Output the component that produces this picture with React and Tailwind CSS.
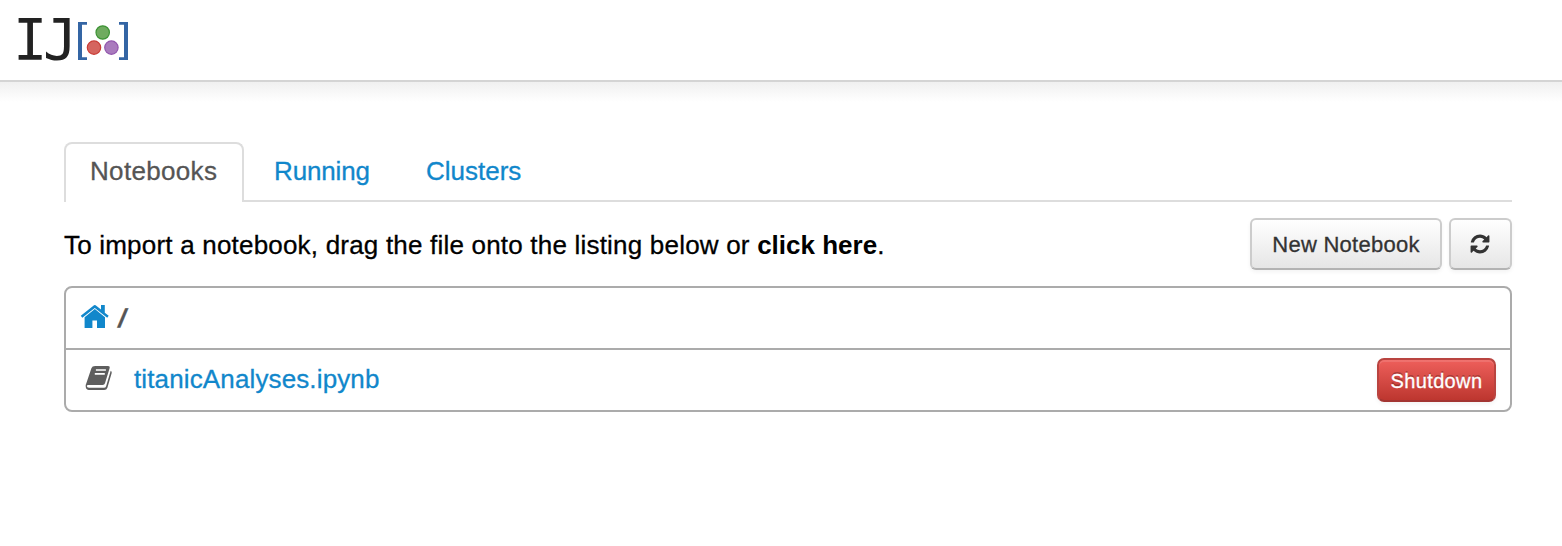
import React from "react";

function RefreshIcon() {
  return (
    <svg viewBox="0 0 1792 1792" fill="currentColor" className="size-[22px]" aria-hidden="true">
      <path d="M1639 1056q0 5-1 7-64 268-268 434.5t-478 166.5q-146 0-282.5-55t-243.5-157l-129 129q-19 19-45 19t-45-19-19-45v-448q0-26 19-45t45-19h448q26 0 45 19t19 45-19 45l-137 137q71 66 161 102t187 36q134 0 250-65t186-179q11-17 53-117 8-23 30-23h192q13 0 22.5 9.5t9.5 22.5zm25-800v448q0 26-19 45t-45 19h-448q-26 0-45-19t-19-45 19-45l138-138q-148-137-349-137-134 0-250 65t-186 179q-11 17-53 117-8 23-30 23h-199q-13 0-22.5-9.5t-9.5-22.5v-7q65-268 270-434.5t480-166.5q146 0 284 55.5t245 156.5l130-129q19-19 45-19t45 19 19 45z" />
    </svg>
  );
}

function HomeIcon() {
  return (
    <svg width="30" height="24" viewBox="0 0 30 24" fill="currentColor" className="mb-1 text-[#1187cb]" aria-hidden="true">
      <path d="M14 1.2q.8-.6 1.6 0L21 5.6V1h3.8v7.7l3.9 3.1-1.5 2L14.8 3.9 2.3 13.8.8 11.8z" />
      <path d="M14.8 5.1 25 13.2V23.9h-8V16.5h-4.6v7.4H4.6V13.2z" />
    </svg>
  );
}

function BookIcon() {
  return (
    <svg width="28" height="26" viewBox="0 0 28 26" className="mb-1 text-[#5e5e5e]" aria-hidden="true">
      <path
        d="M10.2 1H23q2.2 0 1.6 2.2L20 18.2q-.5 1.7-2.4 1.7H3.2q-1.4 0-1.4 1.2 0 1.6 2.2 1.6h15q1.6 0 2.1-1.5L25.7 5.7q1.4.7 1 2.2L22.4 22.7Q21.6 25 19.2 25H4Q.9 25 .7 21.6q-.1-2.1.9-4.1L6.4 3.2Q7.1 1 10.2 1z"
        fill="currentColor"
      />
      <path d="M10.9 5h10M9.8 8.9h10" fill="none" stroke="white" strokeWidth="1.6" />
    </svg>
  );
}

function Logo() {
  return (
    <a className="flex h-20 items-start pl-[13px]">
      <span className="mt-[7px] w-[65px] whitespace-nowrap font-['DejaVu_Sans_Mono',monospace] text-[57px] leading-[66px] tracking-[-4.4px] text-[#222]">
        IJ
      </span>
      <svg width="50" height="38" viewBox="0 0 50 38" className="mt-[22px]" aria-hidden="true">
        <path d="M9 0H0v38h9v-2.8H4V2.8h5zM41 0h9v38h-9v-2.8h5V2.8h-5z" fill="#3465a4" />
        <circle cx="24.7" cy="10.5" r="6.7" fill="#6fab5f" stroke="#3c9334" strokeWidth="1.2" />
        <circle cx="16" cy="25.6" r="6.7" fill="#d5655f" stroke="#c93b35" strokeWidth="1.2" />
        <circle cx="33.4" cy="25.6" r="6.7" fill="#a97bbd" stroke="#9155ad" strokeWidth="1.2" />
      </svg>
    </a>
  );
}

const buttonClass =
  "flex h-[52px] items-center justify-center rounded-[6px] border-2 border-[#ccc] border-b-[#b3b3b3] bg-linear-to-b from-white to-[#e6e6e6] text-[#333] shadow-[0_2px_4px_rgba(0,0,0,0.05)]";

export default function App() {
  return (
    <div className="min-h-[546px] bg-white font-['Liberation_Sans',Arial,sans-serif] text-[26px] leading-10 text-black [-webkit-text-stroke:0.3px_currentColor]">
      <header className="h-[82px] border-b-2 border-[#d4d4d4] [-webkit-text-stroke:0]">
        <Logo />
      </header>
      <div className="h-5 bg-linear-to-b from-[#f0f0f0] to-white" />
      <main className="ml-16 mr-[50px] pt-10">
        <nav className="flex h-[60px] gap-1 border-b-2 border-[#ddd]">
          <a className="h-[60px] w-[180px] rounded-t-[8px] border-2 border-b-0 border-[#ddd] bg-white pl-6 pt-[7px] tracking-[0.33px] text-[#555]">
            Notebooks
          </a>
          <a className="w-[148px] pl-[26px] pt-[9px] tracking-[-0.15px] text-[#1187cb]">Running</a>
          <a className="w-[148px] pl-[26px] pt-[9px] text-[#1187cb]">Clusters</a>
        </nav>
        <div className="flex items-start justify-between pt-4">
          <p className="pt-[7px] whitespace-nowrap tracking-[0.2px]">
            To import a notebook, drag the file onto the listing below or{" "}
            <strong className="tracking-normal [-webkit-text-stroke:0]">click here</strong>.
          </p>
          <div className="flex gap-[7px]">
            <button className={buttonClass + " w-[192px] pt-px text-[22px] tracking-[0.27px]"}>New Notebook</button>
            <button className={buttonClass + " w-[63px] pr-px"}>
              <RefreshIcon />
            </button>
          </div>
        </div>
        <section className="mt-4 h-[126px] rounded-[8px] border-2 border-[#ababab]">
          <div className="flex h-[62px] items-center border-b-2 border-[#ababab] pl-[14px]">
            <HomeIcon />
            <span className="ml-[9px] inline-block -skew-x-[13deg] text-[26px] font-bold text-[#555]">/</span>
          </div>
          <div className="flex h-[60px] items-center pl-[19px] pr-[14px]">
            <BookIcon />
            <a className="mb-[2px] ml-[21px] tracking-[0.13px] text-[#1187cb]">titanicAnalyses.ipynb</a>
            <button className="ml-auto flex h-11 w-[119px] items-center justify-center rounded-[7px] border-2 border-[#b94440] border-b-[#a33532] bg-linear-to-b from-[#ee5f5b] to-[#bd362f] pt-px text-[20px] tracking-[0.35px] text-white shadow-[inset_0_2px_0_rgba(255,255,255,0.12),0_2px_4px_rgba(0,0,0,0.05)] [text-shadow:0_-2px_0_rgba(0,0,0,0.25)]">
              Shutdown
            </button>
          </div>
        </section>
      </main>
    </div>
  );
}
